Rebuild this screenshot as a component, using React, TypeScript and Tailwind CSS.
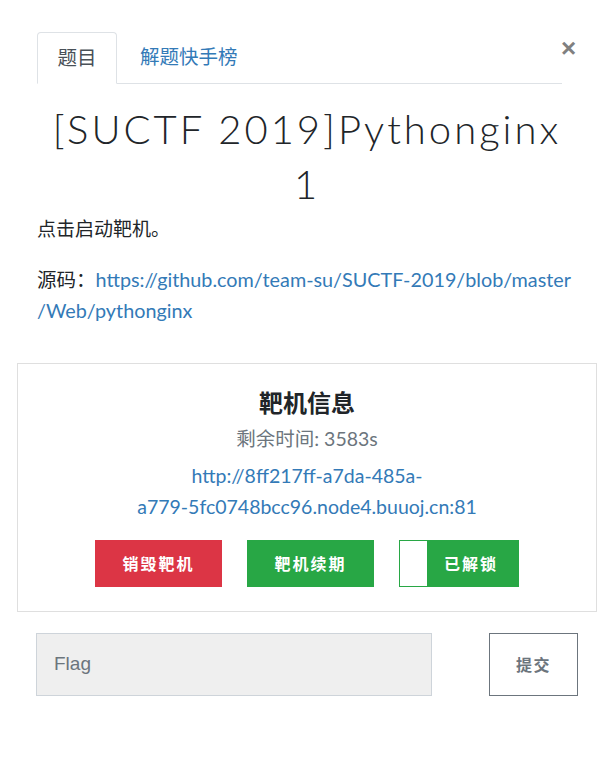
import React from "react";

export default function App() {
  const body = { fontFamily: "Lato, 'Noto Sans CJK SC', sans-serif" };
  return (
    <div className="w-[614px] h-[757px] bg-white text-[#212529] relative" style={body}>
      <div className="px-[37px] pt-[31px]">
        <div className="flex items-end border-b border-[#dee2e6] w-[525px]">
          <div className="h-[52px] w-[80px] -mb-px border border-[#dee2e6] border-b-white rounded-t-[4px] bg-white flex items-center justify-center text-[19.5px] text-[#495057]">
            题目
          </div>
          <div className="h-[52px] pl-[23px] flex items-center text-[19.5px] text-[#337ab7]">解题快手榜</div>
        </div>
        <div className="absolute left-[561px] top-[35px] text-[26px] font-bold text-[#808080] leading-none" style={{ fontFamily: "'Liberation Sans', sans-serif" }}>×</div>

        <h1
          className="text-center text-[40px] font-light leading-[55px] mt-[18px] tracking-[3px] text-[#212529]"
          style={{ fontFamily: "Lato, sans-serif" }}
        >
          [SUCTF 2019]Pythonginx
          <br />1
        </h1>

        <p className="text-[19px] mt-[2px] leading-[30px]">点击启动靶机。</p>
        <p className="text-[19.5px] mt-[20px] leading-[30px]">
          源码：<span className="text-[#337ab7] text-[19.8px] leading-[30px]">https://github.com/team-su/SUCTF-2019/blob/master<br />/Web/pythonginx</span>
        </p>
      </div>

      <div className="mx-[17px] mt-[37px] border border-[#dfdfdf] h-[249px] flex flex-col items-center">
        <div className="mt-[21px] text-[24px] font-bold leading-[36px]">靶机信息</div>
        <div className="mt-[3px] text-[19.5px] text-[#6c757d] leading-[30px]">剩余时间: 3583s</div>
        <div className="mt-[6px] text-[19.5px] text-[#337ab7] leading-[31px] text-center">
          http://8ff217ff-a7da-485a-
          <br />
          a779-5fc0748bcc96.node4.buuoj.cn:81
        </div>
        <div className="mt-[18px] flex gap-[25px]">
          <div className="w-[127px] h-[47px] bg-[#dc3545] text-white font-bold text-[16px] tracking-[2px] flex items-center justify-center">销毁靶机</div>
          <div className="w-[127px] h-[47px] bg-[#28a745] text-white font-bold text-[16px] tracking-[2px] flex items-center justify-center">靶机续期</div>
          <div className="w-[120px] h-[47px] bg-[#28a745] text-white font-bold text-[16px] tracking-[2px] flex items-center p-[1px]">
            <div className="w-[27px] h-full bg-white"></div>
            <div className="flex-1 text-center pr-[3px]">已解锁</div>
          </div>
        </div>
      </div>

      <div className="flex items-center px-[36px] mt-[21px] gap-[57px]">
        <div className="w-[397px] h-[63px] bg-[#efefef] border border-[#ced4da] flex items-center pl-[17px] text-[19px] text-[#6c757d]" style={{ fontFamily: "'Liberation Sans', sans-serif" }}>
          Flag
        </div>
        <div className="w-[89px] h-[63px] border border-[#6c757d] flex items-center justify-center text-[16px] tracking-[1.5px] font-bold text-[#6c757d]">提交</div>
      </div>
    </div>
  );
}
